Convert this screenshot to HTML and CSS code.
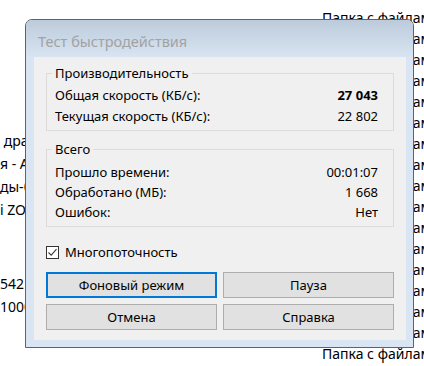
FILE: index.html
```html
<!DOCTYPE html>
<html lang="ru">
<head>
<meta charset="utf-8">
<title>Тест быстродействия</title>
<link rel="stylesheet" href="styles.css">
</head>
<body>
<div class="screen">
  <div class="bg">
    <div class="bg-left">
      <div class="bl-row first">&nbsp;драйвера</div>
      <div class="bl-row">я - Автор</div>
      <div class="bl-row">ды-0000</div>
      <div class="bl-row">i ZOOM</div>
      <div class="bl-row gap">542</div>
      <div class="bl-row">1000000</div>
    </div>
    <div class="bg-right">
      <div class="br-row">Папка с файлами</div>
      <div class="br-row">Папка с файлами</div>
      <div class="br-row">Папка с файлами</div>
      <div class="br-row">Папка с файлами</div>
      <div class="br-row">Папка с файлами</div>
      <div class="br-row">Папка с файлами</div>
      <div class="br-row">Папка с файлами</div>
      <div class="br-row">Папка с файлами</div>
      <div class="br-row">Папка с файлами</div>
      <div class="br-row">Папка с файлами</div>
      <div class="br-row">Папка с файлами</div>
      <div class="br-row">Папка с файлами</div>
      <div class="br-row">Папка с файлами</div>
      <div class="br-row">Папка с файлами</div>
      <div class="br-row">Папка с файлами</div>
      <div class="br-row">Папка с файлами</div>
      <div class="br-row">Папка с файлами</div>
    </div>
  </div>

  <div class="dialog">
    <div class="titlebar">Тест быстродействия</div>
    <div class="client">
      <fieldset class="group perf">
        <legend>Производительность</legend>
        <div class="row"><span>Общая скорость (КБ/с):</span><span class="val bold">27 043</span></div>
        <div class="row"><span>Текущая скорость (КБ/с):</span><span class="val">22 802</span></div>
      </fieldset>
      <fieldset class="group total">
        <legend>Всего</legend>
        <div class="row"><span>Прошло времени:</span><span class="val">00:01:07</span></div>
        <div class="row"><span>Обработано (МБ):</span><span class="val">1 668</span></div>
        <div class="row"><span>Ошибок:</span><span class="val">Нет</span></div>
      </fieldset>
      <label class="check">
        <span class="box"><svg width="11" height="11" viewBox="0 0 11 11"><polyline points="1.5,5.5 4.2,8.2 9.5,2.2" fill="none" stroke="#3a3a3a" stroke-width="1.1"/></svg></span>
        <span>Многопоточность</span>
      </label>
      <div class="buttons">
        <button class="btn focus">Фоновый режим</button>
        <button class="btn">Пауза</button>
        <button class="btn">Отмена</button>
        <button class="btn">Справка</button>
      </div>
    </div>
  </div>
</div>
</body>
</html>
```
FILE: styles.css
```css
* { box-sizing: border-box; }
html, body { margin: 0; padding: 0; }
body {
  background: #ffffff;
  font-family: "Noto Sans", "Liberation Sans", sans-serif;
  color: #000;
}
.screen {
  position: relative;
  width: 424px;
  height: 366px;
  overflow: hidden;
  background: #ffffff;
}
.bg {
  display: grid;
  grid-template-columns: 322px 1fr;
  font-size: 14px;
  white-space: nowrap;
}
.bg-left {
  padding-top: 129px;
  overflow: hidden;
}
.bl-row { height: 23px; line-height: 23px; }
.bl-row.gap { margin-top: 51px; }
.bg-right {
  padding-top: 7px;
  overflow: hidden;
}
.br-row { height: 21px; line-height: 21px; }

.dialog {
  position: absolute;
  left: 25px;
  top: 19px;
  width: 389px;
  height: 329px;
  border: 1px solid #5f6366;
  border-radius: 7px 7px 0 0;
  background: #d9e5f2;
  display: flex;
  flex-direction: column;
  padding: 0 7px 7px 8px;
}
.titlebar {
  height: 37px;
  margin: 0 -7px 0 -8px;
  padding: 11px 0 0 12px;
  border-radius: 6px 6px 0 0;
  background: linear-gradient(#bccbdb, #d8e4f1);
  color: #a2a2a2;
  font-size: 14.5px;
  line-height: 20px;
}
.client {
  flex: 1;
  background: #f0f0f0;
  padding: 6px 12px 10px 12px;
  display: flex;
  flex-direction: column;
  font-size: 13px;
}
.group {
  margin: 0;
  border: 1px solid #dcdcdc;
  padding: 2px 15px 3px 8px;
}
.group legend {
  padding: 0 3px;
  margin-left: -3px;
  line-height: 20px;
}
.group.total {
  margin-top: 8px;
  padding-top: 3px;
  padding-bottom: 4px;
}
.row {
  display: flex;
  justify-content: space-between;
  height: 21px;
  line-height: 21px;
}
.total .row { height: 20px; line-height: 20px; }
.bold { font-weight: 700; }

.check {
  margin-top: 15px;
  display: flex;
  align-items: center;
  gap: 6px;
  height: 20px;
}
.box {
  width: 13px;
  height: 13px;
  border: 1px solid #333;
  background: #fff;
  display: flex;
  align-items: center;
  justify-content: center;
}
.box svg { display: block; }

.buttons {
  margin-top: 10px;
  display: grid;
  grid-template-columns: 1fr 1fr;
  grid-auto-rows: 26px;
  column-gap: 6px;
  row-gap: 6px;
}
.btn {
  font-family: inherit;
  font-size: 13px;
  color: #000;
  background: #e1e1e1;
  border: 1px solid #adadad;
  padding: 0;
  margin: 0;
}
.btn.focus {
  border: 2px solid #0078d7;
}
```
